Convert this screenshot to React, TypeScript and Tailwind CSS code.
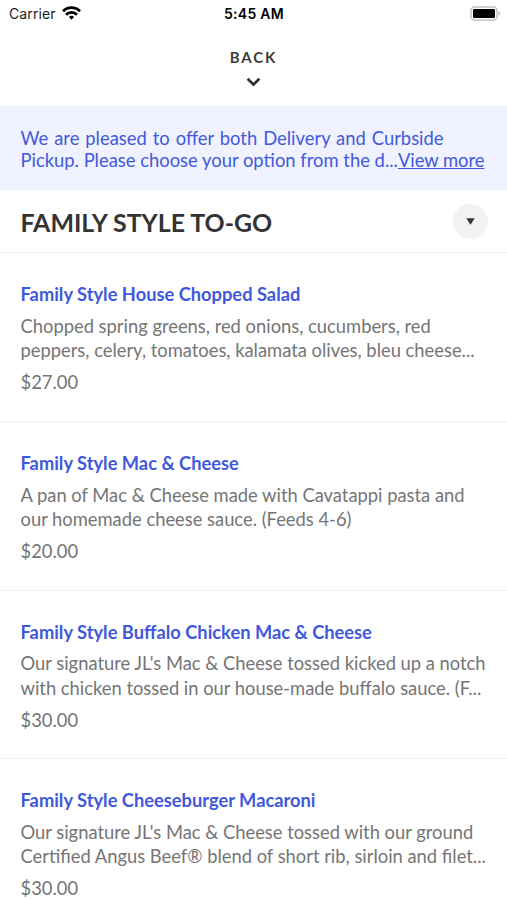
const items = [
  {
    name: 'Family Style House Chopped Salad',
    lines: ['Chopped spring greens, red onions, cucumbers, red', 'peppers, celery, tomatoes, kalamata olives, bleu cheese...'],
    price: '$27.00',
  },
  {
    name: 'Family Style Mac & Cheese',
    lines: ['A pan of Mac & Cheese made with Cavatappi pasta and', 'our homemade cheese sauce. (Feeds 4-6)'],
    price: '$20.00',
  },
  {
    name: 'Family Style Buffalo Chicken Mac & Cheese',
    lines: ["Our signature JL's Mac & Cheese tossed kicked up a notch", 'with chicken tossed in our house-made buffalo sauce. (F...'],
    price: '$30.00',
  },
  {
    name: 'Family Style Cheeseburger Macaroni',
    lines: ["Our signature JL's Mac & Cheese tossed with our ground", 'Certified Angus Beef® blend of short rib, sirloin and filet...'],
    price: '$30.00',
  },
];

function StatusBar() {
  return (
    <div className="grid h-[27px] grid-cols-3 items-center pr-[6px] pl-[9px] font-[Inter,sans-serif] text-[14px] text-[#222]">
      <div className="flex items-center gap-[6px]">
        <span className="tracking-[0.1px]">Carrier</span>
        <svg className="-mt-[2px]" width="19" height="14" viewBox="0 0 19 14" fill="none" stroke="#000" strokeWidth="2.8">
          <path d="M1 5.2a12 12 0 0 1 17 0" />
          <path d="M4 8.7a7.8 7.8 0 0 1 11 0" />
          <path d="m9.5 13.8-2.6-2.7a3.7 3.7 0 0 1 5.2 0Z" fill="#000" stroke="none" />
        </svg>
      </div>
      <span className="-ml-[2px] text-center font-semibold tracking-[0.3px] text-black">5:45 AM</span>
      <svg className="-mt-px justify-self-end" width="31" height="15" viewBox="0 0 31 15">
        <rect x="1" y="1" width="26" height="13" rx="3.5" fill="none" stroke="#c4c4c4" strokeWidth="1.6" />
        <rect x="3" y="3" width="22" height="9" rx="1.3" />
        <path d="M28.5 5.3v4.4c2-.6 2-3.8 0-4.4" fill="#b5b5b5" />
      </svg>
    </div>
  );
}

export default function App() {
  return (
    <div className="h-[900px] overflow-hidden bg-white font-[Lato,sans-serif] text-[#757575]">
      <StatusBar />
      <button className="flex h-[79px] w-full flex-col items-center pt-[20px] text-[#3c3c3c]">
        <span className="text-[15px] leading-[20px] font-bold tracking-[1.9px]">BACK</span>
        <svg className="mt-[9.5px]" width="15" height="10" viewBox="0 0 15 10" fill="none" stroke="#333" strokeWidth="2.8">
          <path d="m1.6 1.8 5.9 5.7 5.9-5.7" />
        </svg>
      </button>

      {/* Notice */}
      <div className="h-[84px] bg-[#f0f2ff] px-[20.5px] pt-[21px] text-[18.4px] leading-[22px] whitespace-nowrap text-[#4059dc]">
        <p className="[word-spacing:1.25px]">We are pleased to offer both Delivery and Curbside</p>
        <p>
          Pickup. Please choose your option from the d<span>...</span><a className="tracking-[-0.04px] underline">View more</a>
        </p>
      </div>

      {/* Category heading */}
      <div className="flex h-[63.4px] items-center justify-between border-b border-[#f0f0f0] pr-[19px] pl-[20.5px]">
        <h1 className="pt-[2px] text-[24.9px] font-bold text-[#333]">FAMILY STYLE TO-GO</h1>
        <button className="mt-px flex size-[35px] items-center justify-center rounded-full bg-[#f2f2f2]">
          <svg width="9" height="7" viewBox="0 0 9 7" fill="#333">
            <path d="M.3.3h8.4L4.5 6.7Z" />
          </svg>
        </button>
      </div>

      {items.map(item => (
        <div key={item.name} className="h-[168.6px] border-b border-[#f0f0f0] px-[20.5px] pt-[28px] whitespace-nowrap">
          <h2 className="text-[18.3px] leading-[26px] font-bold text-[#4059dc]">{item.name}</h2>
          <div className="mt-[6.6px] text-[18.35px] leading-[24.5px]">
            {item.lines.map(line => <p key={line}>{line}</p>)}
          </div>
          <p className="mt-[6.4px] text-[18.35px] leading-[26px]">{item.price}</p>
        </div>
      ))}
    </div>
  );
}
